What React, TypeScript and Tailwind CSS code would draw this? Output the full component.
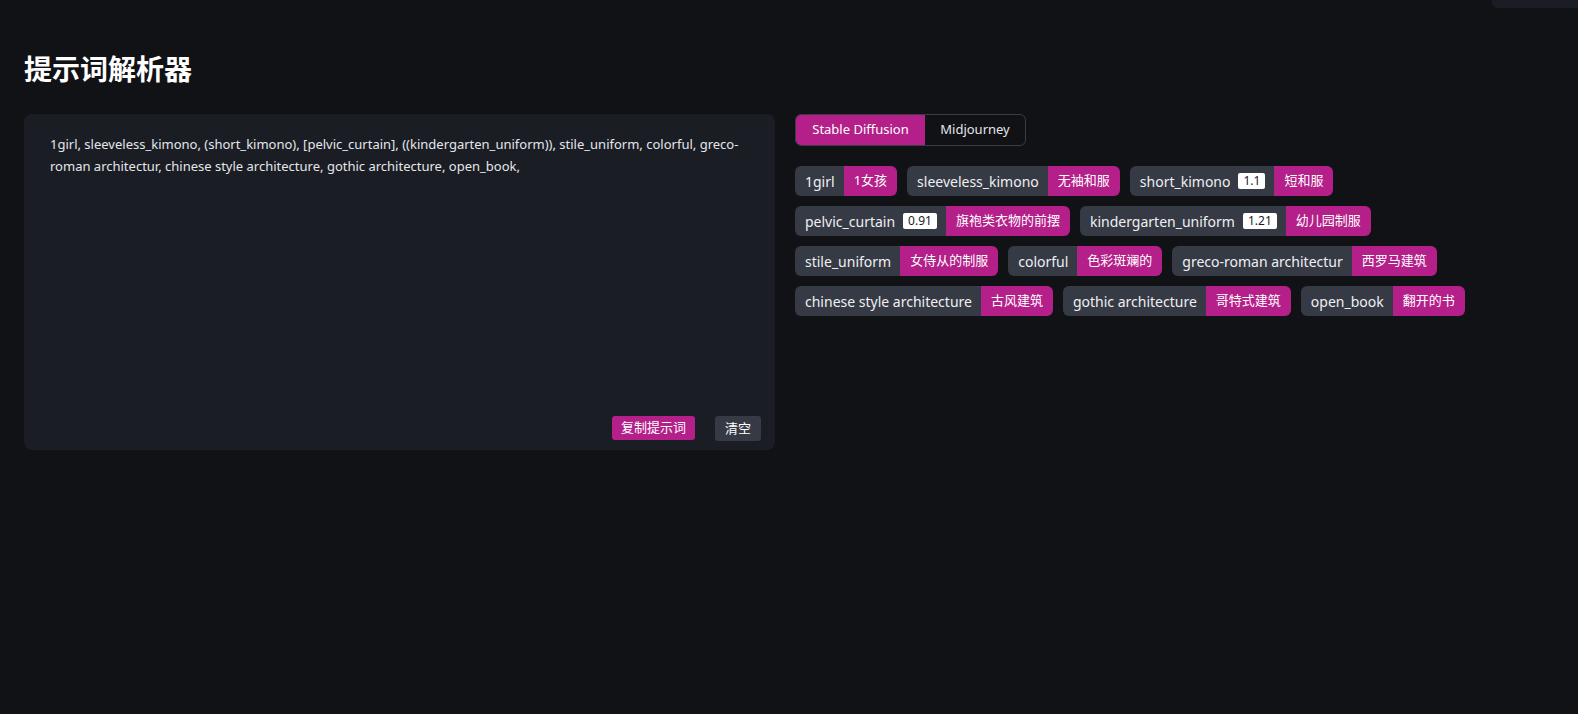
import React, { useState } from 'react';

type Tag = { en: string; zh: string; weight?: string };

const tags: Tag[] = [
	{ en: '1girl', zh: '1女孩' },
	{ en: 'sleeveless_kimono', zh: '无袖和服' },
	{ en: 'short_kimono', zh: '短和服', weight: '1.1' },
	{ en: 'pelvic_curtain', zh: '旗袍类衣物的前摆', weight: '0.91' },
	{ en: 'kindergarten_uniform', zh: '幼儿园制服', weight: '1.21' },
	{ en: 'stile_uniform', zh: '女侍从的制服' },
	{ en: 'colorful', zh: '色彩斑斓的' },
	{ en: 'greco-roman architectur', zh: '西罗马建筑' },
	{ en: 'chinese style architecture', zh: '古风建筑' },
	{ en: 'gothic architecture', zh: '哥特式建筑' },
	{ en: 'open_book', zh: '翻开的书' },
];

const prompt =
	'1girl, sleeveless_kimono, (short_kimono), [pelvic_curtain], ((kindergarten_uniform)), stile_uniform, colorful, greco-roman architectur, chinese style architecture, gothic architecture, open_book,';

const font = { fontFamily: '"Noto Sans", "Noto Sans CJK SC", sans-serif' };

function TagChip({ tag }: { tag: Tag }) {
	return (
		<div className="flex h-[30px] overflow-hidden rounded-[6px] text-[14px]">
			<div className="flex items-center gap-2 bg-[#363a44] pl-[10px] pr-[9px] text-[#eef0f3]">
				<span>{tag.en}</span>
				{tag.weight && (
					<span className="rounded-[2px] bg-white px-[5px] text-[12px] leading-[16px] text-[#1b1d24]">
						{tag.weight}
					</span>
				)}
			</div>
			<div className="flex items-center bg-[#b41f89] px-[10px] text-[13px] text-white">{tag.zh}</div>
		</div>
	);
}

export default function App() {
	const [mode, setMode] = useState('sd');

	return (
		<div className="relative min-h-[714px] bg-[#111216] px-6 pt-[50px]" style={font}>
			<div className="absolute right-0 top-0 h-[8px] w-[86px] rounded-bl-[6px] bg-[#1b1d24]" />

			<h1 className="text-[28px] font-bold leading-[38px] text-white">提示词解析器</h1>

			<div className="mt-[26px] flex gap-5">
				<div className="flex h-[336px] w-[751px] shrink-0 flex-col rounded-[8px] bg-[#1b1d24] pb-[9px] pl-[26px] pr-[14px] pt-[19px]">
					<p className="pr-[12px] text-[13px] leading-[22px] text-[#e4e6ea]">{prompt}</p>
					<div className="mt-auto flex justify-end gap-5 text-[13px]">
						<button className="h-[24px] rounded-[3px] bg-[#b41f89] px-[9px] text-white">复制提示词</button>
						<button className="h-[25px] rounded-[3px] bg-[#363a44] px-[10px] text-white">清空</button>
					</div>
				</div>

				<div className="flex flex-1 flex-col">
					<div className="flex h-[32px] w-fit overflow-hidden rounded-[6px] border border-[#3a3d46] text-[13px]">
						<button
							onClick={() => setMode('sd')}
							className={mode === 'sd' ? 'w-[129px] bg-[#b41f89] text-white' : 'w-[129px] text-[#e4e6ea]'}
						>
							Stable Diffusion
						</button>
						<button
							onClick={() => setMode('mj')}
							className={mode === 'mj' ? 'w-[100px] bg-[#b41f89] text-white' : 'w-[100px] text-[#e4e6ea]'}
						>
							Midjourney
						</button>
					</div>

					<div className="mt-5 flex max-w-[700px] flex-wrap gap-[10px]">
						{tags.map((t) => (
							<TagChip key={t.en} tag={t} />
						))}
					</div>
				</div>
			</div>
		</div>
	);
}
